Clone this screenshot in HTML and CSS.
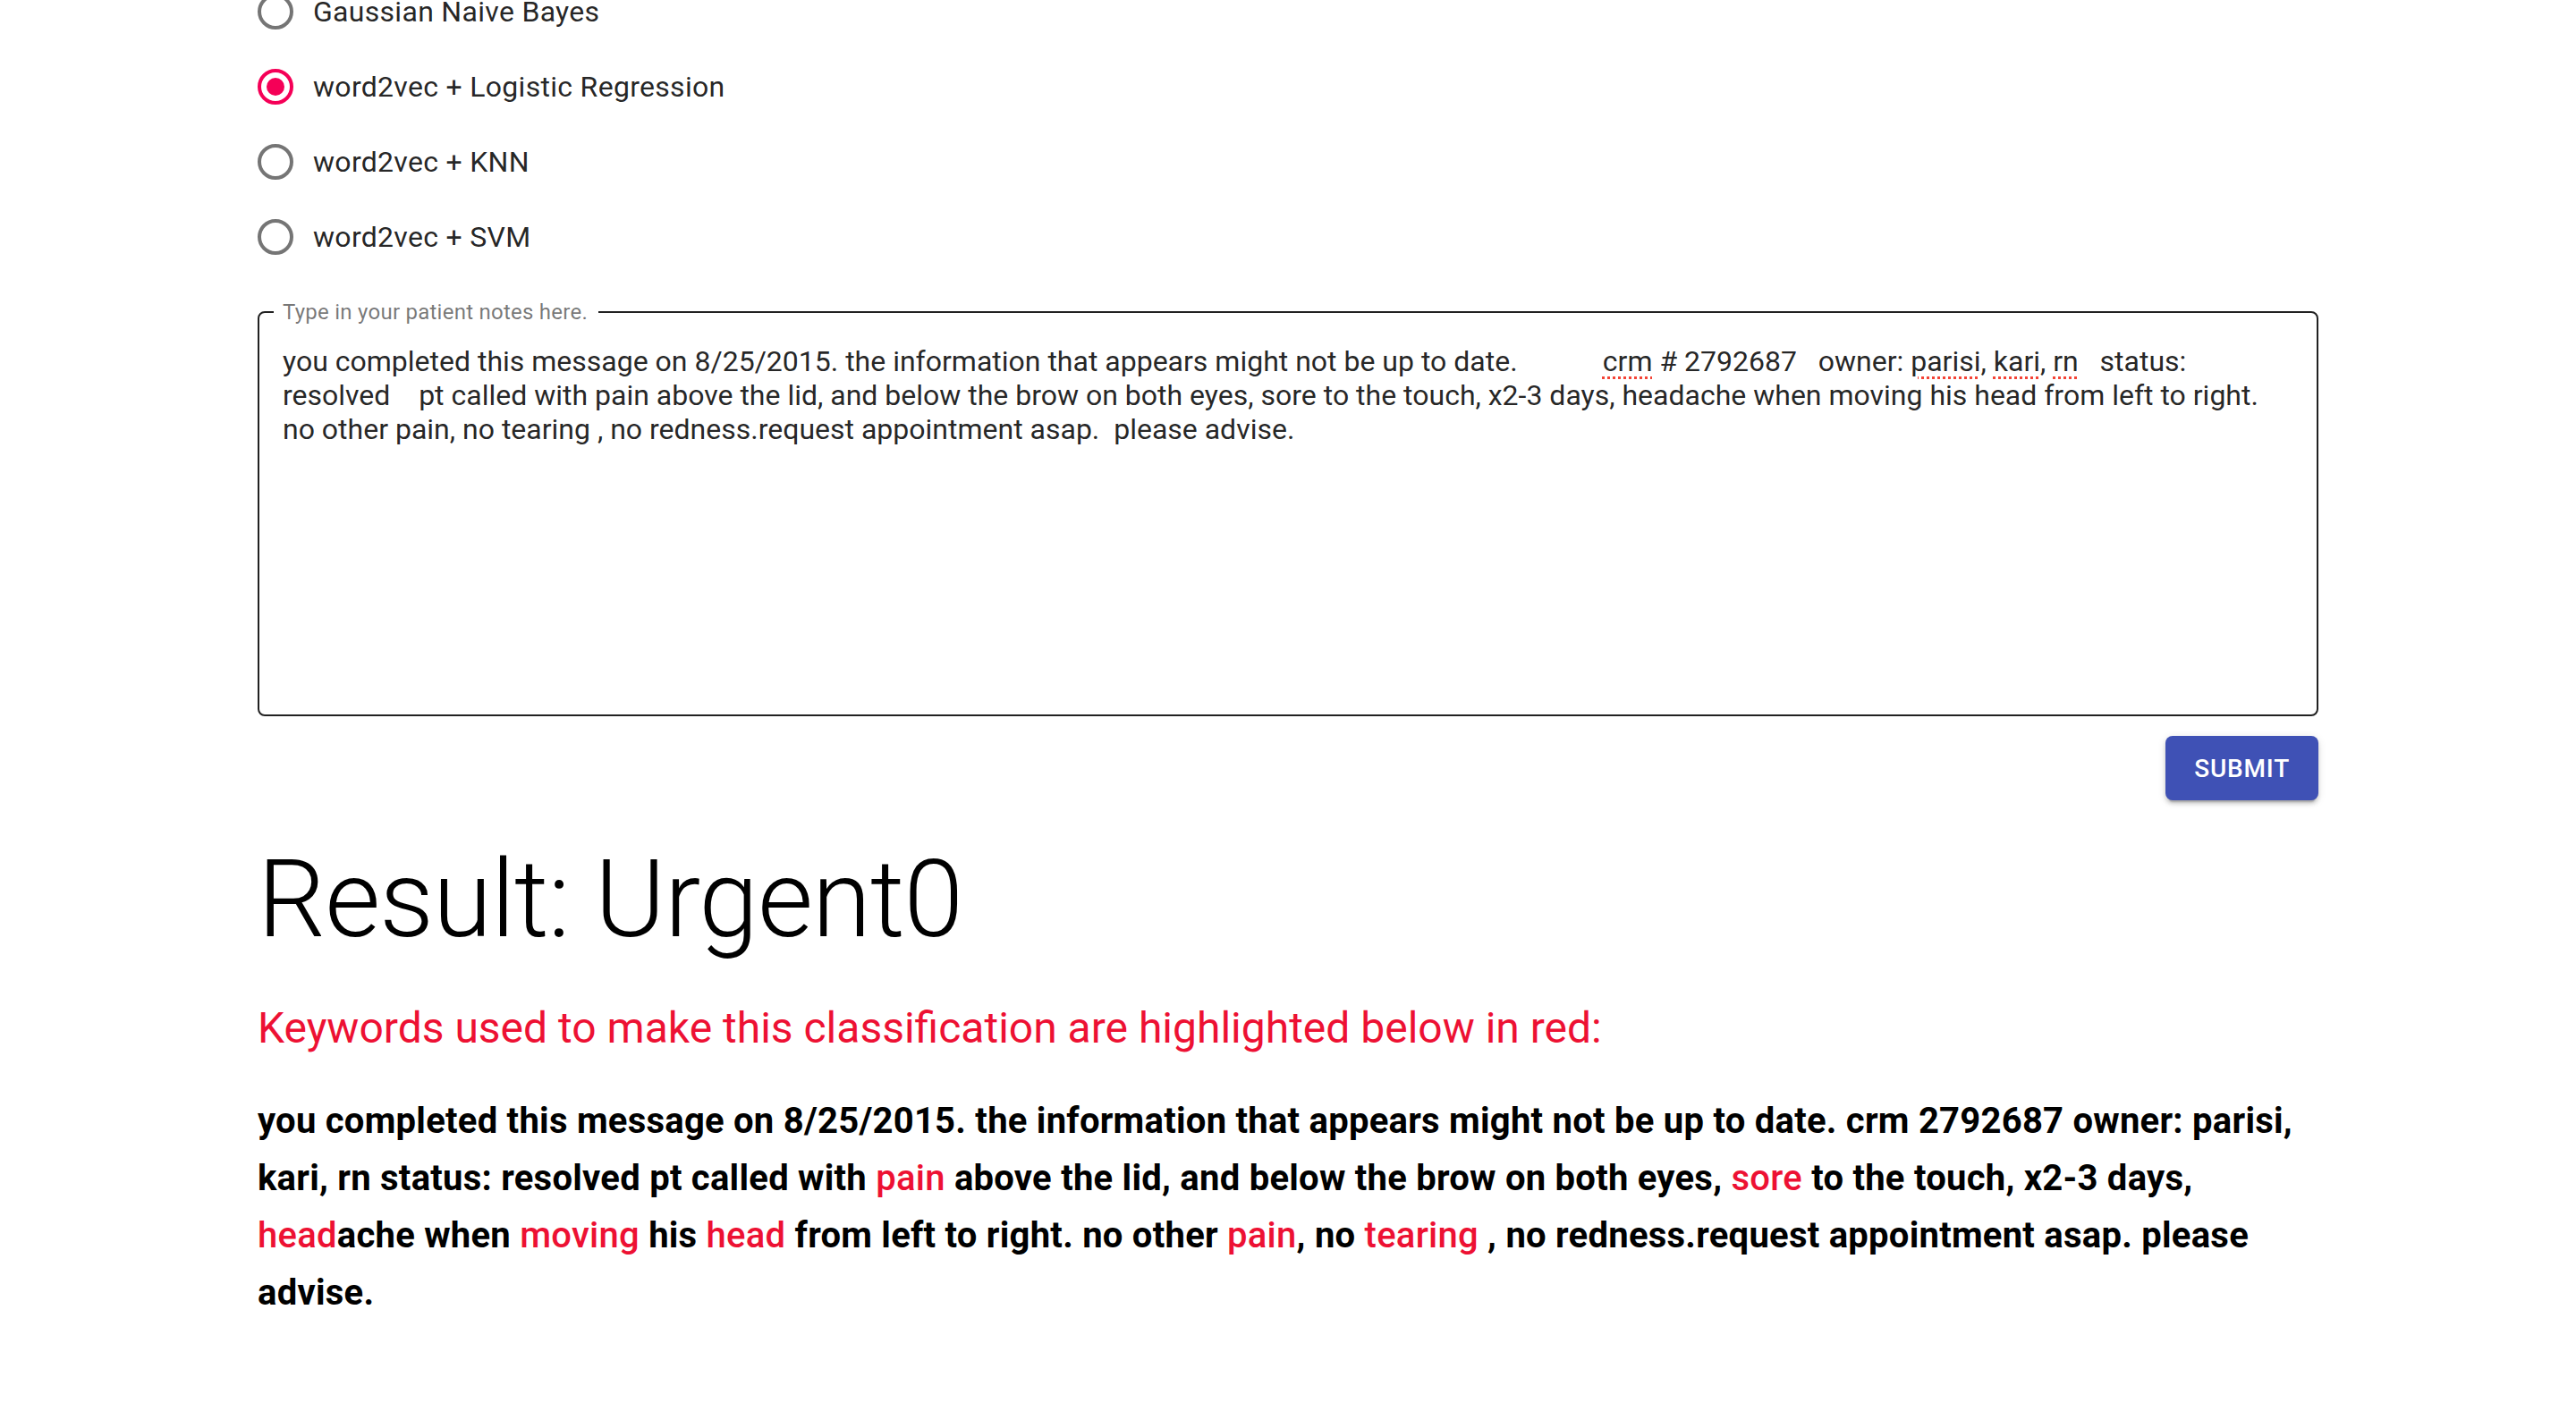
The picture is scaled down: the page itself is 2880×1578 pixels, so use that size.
FILE: index.html
```html
<!DOCTYPE html>
<html lang="en">
<head>
  <meta charset="UTF-8">
  <title>Patient Note Triage</title>
  <link rel="stylesheet" href="styles.css">
</head>
<body>
  <div class="page">
    <div class="radio-group">
      <label class="radio-row">
        <span class="radio"><svg viewBox="0 0 24 24"><circle cx="12" cy="12" r="9" class="ring"/></svg></span>
        <span class="radio-text">Gaussian Naive Bayes</span>
      </label>
      <label class="radio-row checked">
        <span class="radio"><svg viewBox="0 0 24 24"><circle cx="12" cy="12" r="9" class="ring"/><circle cx="12" cy="12" r="5" class="dot"/></svg></span>
        <span class="radio-text">word2vec + Logistic Regression</span>
      </label>
      <label class="radio-row">
        <span class="radio"><svg viewBox="0 0 24 24"><circle cx="12" cy="12" r="9" class="ring"/></svg></span>
        <span class="radio-text">word2vec + KNN</span>
      </label>
      <label class="radio-row">
        <span class="radio"><svg viewBox="0 0 24 24"><circle cx="12" cy="12" r="9" class="ring"/></svg></span>
        <span class="radio-text">word2vec + SVM</span>
      </label>
    </div>

    <fieldset class="notes">
      <legend>Type in your patient notes here.</legend>
      <div class="notes-text">you completed this message on 8/25/2015. the information that appears might not be up to date.            <span class="typo">crm</span> # 2792687   owner: <span class="typo">parisi</span>, <span class="typo">kari</span>, <span class="typo">rn</span>   status: resolved    pt called with pain above the lid, and below the brow on both eyes, sore to the touch, x2-3 days, headache when moving his head from left to right. no other pain, no tearing , no redness.request appointment asap.  please advise.</div>
    </fieldset>

    <div class="actions">
      <button class="submit">Submit</button>
    </div>

    <h2 class="result">Result: Urgent0</h2>
    <h5 class="keywords">Keywords used to make this classification are highlighted below in red:</h5>
    <p class="highlighted">you completed this message on 8/25/2015. the information that appears might not be up to date. crm 2792687 owner: parisi, kari, rn status: resolved pt called with <span class="kw">pain</span> above the lid, and below the brow on both eyes, <span class="kw">sore</span> to the touch, x2-3 days, <span class="kw">head</span>ache when <span class="kw">moving</span> his <span class="kw">head</span> from left to right. no other <span class="kw">pain</span>, no <span class="kw">tearing</span> , no redness.request appointment asap. please advise.</p>
  </div>
</body>
</html>
```

FILE: styles.css
```css
body { margin: 0; background: #fff; font-family: Roboto, "Helvetica Neue", Arial, sans-serif; color: rgba(0, 0, 0, 0.87); }
.page { width: 2304px; margin: 0 auto; }

.radio-group { display: flex; flex-direction: column; margin-top: -29px; }
.radio-row { display: flex; align-items: center; height: 84px; margin-left: -22px; cursor: pointer; }
.radio { display: flex; padding: 18px; }
.radio svg { width: 48px; height: 48px; }
.radio .ring { fill: none; stroke: rgba(0, 0, 0, 0.54); stroke-width: 2; }
.checked .radio .ring { stroke: #f50057; }
.radio .dot { fill: #f50057; }
.radio-text { font-size: 32px; line-height: 48px; letter-spacing: 0.3px; }

.notes { margin: 28px 0 0; padding: 22px 26px 34px; border: 2px solid rgba(0, 0, 0, 0.87); border-radius: 8px; }
.notes legend { margin-left: -10px; padding: 0 12px 0 10px; font-size: 24px; line-height: 28px; letter-spacing: 0.25px; color: rgba(0, 0, 0, 0.54); }
.notes-text { height: 380px; font-size: 32px; line-height: 38px; white-space: pre-wrap; }
.typo { text-decoration: underline dotted #f44336; text-decoration-thickness: 3px; text-underline-offset: 6px; }

.actions { display: flex; justify-content: flex-end; margin-top: 22px; }
.submit { height: 72px; padding: 0 32px; border: none; border-radius: 8px; background: #3f51b5; color: #fff; font-family: inherit; font-size: 28px; font-weight: 500; letter-spacing: 0.8px; text-transform: uppercase; box-shadow: 0 6px 2px -4px rgba(0,0,0,0.2), 0 4px 4px 0 rgba(0,0,0,0.14), 0 2px 10px 0 rgba(0,0,0,0.12); cursor: pointer; }

.result { margin: 39px 0 0; font-size: 120px; font-weight: 300; line-height: 1.2; letter-spacing: -1px; color: #000; }
.keywords { margin: 40px 0 0; font-size: 48px; font-weight: 400; line-height: 64px; color: #ed1133; }
.highlighted { margin: 40px 0 0; font-size: 40px; font-weight: 700; line-height: 64px; letter-spacing: 0.25px; color: #000; }
.kw { color: #ed1133; font-weight: 500; }
```
